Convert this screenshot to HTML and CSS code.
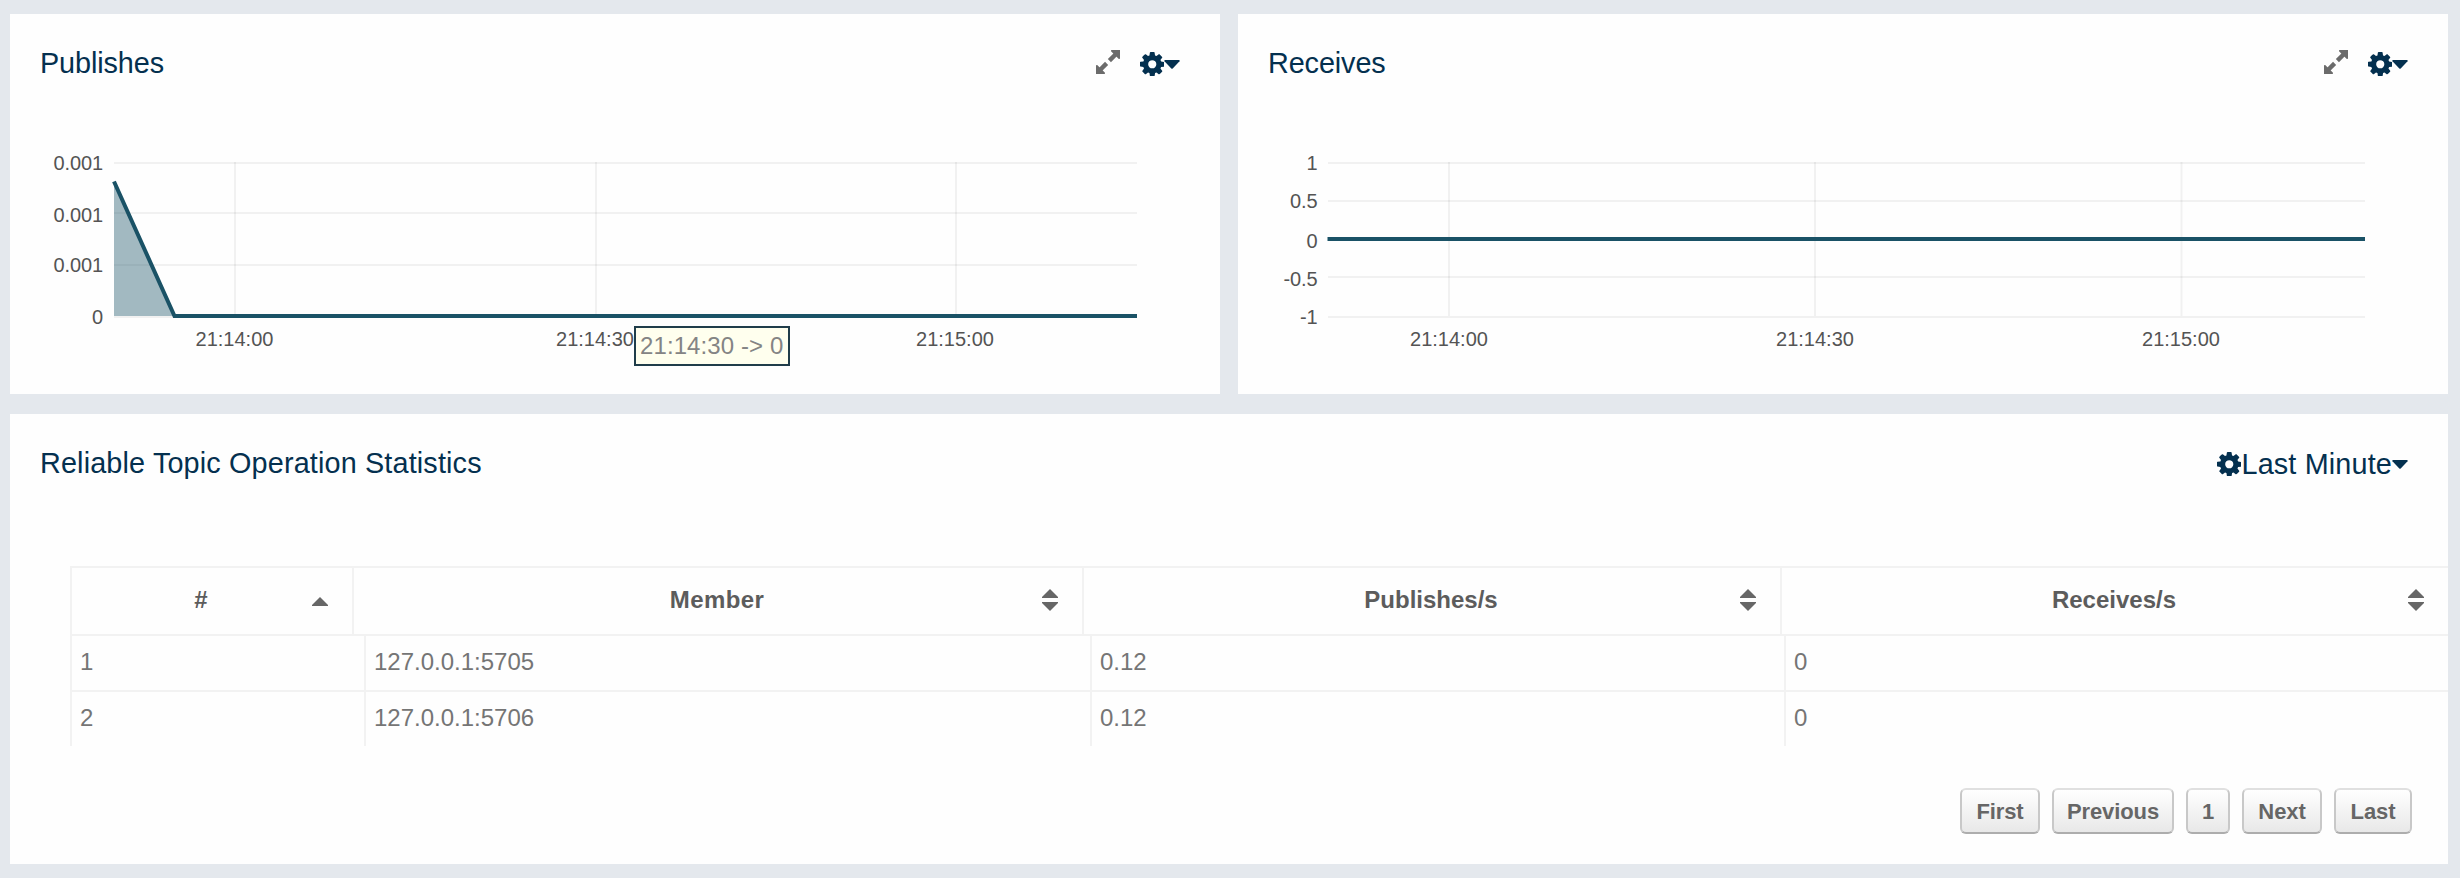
FILE: index.html
```html
<!DOCTYPE html>
<html lang="en">
<head>
<meta charset="utf-8">
<title>Reliable Topic</title>
<link rel="stylesheet" href="styles.css">
</head>
<body>
<svg width="0" height="0" class="defs">
  <symbol id="cog" viewBox="0 -128 1536 1536"><path d="M1024 640q0-106-75-181t-181-75-181 75-75 181 75 181 181 75 181-75 75-181zm512-109v222q0 12-8 23t-20 13l-185 28q-19 54-39 91 35 50 107 138 10 12 10 25t-9 23q-27 37-99 108t-94 71q-12 0-26-9l-138-108q-44 23-91 38-16 136-29 186-7 28-36 28h-222q-14 0-24.500-8.500t-11.500-21.500l-28-184q-49-16-90-37l-141 107q-10 9-25 9-14 0-25-11-126-114-165-168-7-10-7-23 0-12 8-23 15-21 51-66.500t54-70.500q-27-50-41-99l-183-27q-13-2-21-12.500t-8-23.500v-222q0-12 8-23t19-13l186-28q14-46 39-92-40-57-107-138-10-12-10-24 0-10 9-23 26-36 98.500-107.500t94.500-71.500q13 0 26 10l138 107q44-23 91-38 16-136 29-186 7-28 36-28h222q14 0 24.500 8.500t11.500 21.500l28 184q49 16 90 37l142-107q9-9 24-9 13 0 25 10 129 119 165 170 7 8 7 22 0 12-8 23-15 21-51 66.500t-54 70.500q26 50 41 98l183 28q13 2 21 12.500t8 23.500z"/></symbol>
  <symbol id="expand" viewBox="0 0 24 24">
    <path d="M15.200 0H24V8.800L22.800 9L15 1.200ZM0 15.200V24H8.800L9 22.800L1.200 15Z"/>
    <path d="M13.400 10.600L20 4M10.600 13.400L4 20" stroke="#6b6b6b" stroke-width="4.400"/>
  </symbol>
  <symbol id="caret" viewBox="0 0 16 9"><path d="M.8 0H15.200Q16 .5 15.500 1.300L8.700 8.500Q8 9 7.300 8.500L.5 1.300Q0 .5.8 0Z"/></symbol>
  <symbol id="sort" viewBox="0 0 16 22"><path d="M8 0L16 8V9H0V8ZM0 13H16V14L8 22L0 14Z"/></symbol>
  <symbol id="sort-up" viewBox="0 0 16 22"><path d="M8 8L16 16V17H0V16Z"/></symbol>
</svg>
<main class="page">
  <div class="charts">
    <section class="panel chart-panel">
      <header class="panel-head">
        <h2>Publishes</h2>
        <div class="tools"><svg class="expand"><use href="#expand"/></svg><svg class="cog"><use href="#cog"/></svg><svg class="caret"><use href="#caret"/></svg></div>
      </header>
      <svg class="plot" viewBox="10 100 1210 280">
        <g class="grid">
          <path d="M114 163H1137M114 213H1137M114 265H1137M114 317H1137"/>
          <path d="M235 162V316M596 162V316M956 162V316"/>
        </g>
        <path class="area" d="M114 181.500L174.500 316H114Z"/>
        <path class="line" d="M114 181.500L174.500 316H1137"/>
        <g class="y-labels">
          <text x="103" y="170">0.001</text><text x="103" y="222">0.001</text><text x="103" y="272">0.001</text><text x="103" y="324">0</text>
        </g>
        <g class="x-labels">
          <text x="234.500" y="346">21:14:00</text><text x="595" y="346">21:14:30</text><text x="955" y="346">21:15:00</text>
        </g>
      </svg>
      <div class="tooltip">21:14:30 -&gt; 0</div>
    </section>
    <section class="panel chart-panel">
      <header class="panel-head">
        <h2>Receives</h2>
        <div class="tools"><svg class="expand"><use href="#expand"/></svg><svg class="cog"><use href="#cog"/></svg><svg class="caret"><use href="#caret"/></svg></div>
      </header>
      <svg class="plot" viewBox="1238 100 1210 280">
        <g class="grid">
          <path d="M1328 163H2365M1328 201H2365M1328 277H2365M1328 317H2365"/>
          <path d="M1449 162V316M1815 162V316M2181.500 162V316"/>
        </g>
        <path class="line" d="M1327.500 239H2365"/>
        <g class="y-labels">
          <text x="1317.500" y="170">1</text><text x="1317.500" y="208">0.5</text><text x="1317.500" y="248">0</text><text x="1317.500" y="286">-0.5</text><text x="1317.500" y="324">-1</text>
        </g>
        <g class="x-labels">
          <text x="1449" y="346">21:14:00</text><text x="1815" y="346">21:14:30</text><text x="2181" y="346">21:15:00</text>
        </g>
      </svg>
    </section>
  </div>
  <section class="panel stats">
    <header class="panel-head">
      <h2>Reliable Topic Operation Statistics</h2>
      <div class="tools"><svg class="cog"><use href="#cog"/></svg><span class="range">Last Minute</span><svg class="caret"><use href="#caret"/></svg></div>
    </header>
    <div class="table">
      <div class="row head">
        <div class="th">#<svg class="sort"><use href="#sort-up"/></svg></div>
        <div class="th">Member<svg class="sort"><use href="#sort"/></svg></div>
        <div class="th">Publishes/s<svg class="sort"><use href="#sort"/></svg></div>
        <div class="th">Receives/s<svg class="sort"><use href="#sort"/></svg></div>
      </div>
      <div class="row"><div class="td">1</div><div class="td">127.0.0.1:5705</div><div class="td">0.12</div><div class="td">0</div></div>
      <div class="row"><div class="td">2</div><div class="td">127.0.0.1:5706</div><div class="td">0.12</div><div class="td">0</div></div>
    </div>
    <nav class="pager"><button>First</button><button>Previous</button><button>1</button><button>Next</button><button>Last</button></nav>
  </section>
</main>
</body>
</html>
```
FILE: styles.css
```css
* { box-sizing: border-box; }
body {
  margin: 0;
  background: #e4e8ed;
  font-family: "Liberation Sans", Arial, sans-serif;
}
.defs { display: none; }
.page {
  width: 2460px;
  height: 878px;
  padding: 14px 12px 14px 10px;
  display: flex;
  flex-direction: column;
  gap: 20px;
  overflow: hidden;
}
.charts { display: grid; grid-template-columns: 1210px 1210px; gap: 18px; height: 380px; }
.panel { background: #fefefe; position: relative; }
.panel-head {
  display: flex;
  justify-content: space-between;
  height: 86px;
  padding: 31px 40px 0 30px;
  color: #04304f;
}
.panel-head h2 { margin: 1px 0 0; font-size: 28.800px; font-weight: 400; line-height: 34px; letter-spacing: -0.1px; }
.stats .panel-head h2 { letter-spacing: 0.15px; }
.tools { display: flex; height: 34px; align-items: center; padding-top: 4px; fill: currentColor; }
.expand { width: 24px; height: 24px; margin: -4px 19.500px 0 0; fill: #6b6b6b; }
.cog { width: 24.500px; height: 24.500px; }
.caret { width: 16px; height: 9px; }
.range { font-size: 28.800px; line-height: 34px; letter-spacing: 0.15px; margin-top: 0; }
.plot { display: block; width: 1210px; height: 280px; }
.grid path { stroke: #000; stroke-opacity: 0.05; stroke-width: 2; fill: none; }
.area { fill: #1a5266; fill-opacity: 0.4; }
.line { stroke: #1a5266; stroke-width: 4; fill: none; }
.plot text { font-size: 20px; fill: #545454; }
.y-labels { text-anchor: end; letter-spacing: -0.1px; }
.x-labels { text-anchor: middle; }
.tooltip {
  position: absolute;
  left: 624px;
  top: 312px;
  width: 156px;
  height: 40px;
  border: 2px solid #203d4a;
  background: #ffffee;
  color: #848484;
  font-size: 24px;
  line-height: 35px;
  letter-spacing: 0.1px;
  padding-left: 4px;
  white-space: nowrap;
}
.stats { height: 450px; }
.table { margin: 66px 0 0 60px; border-left: 2px solid #f2f2f2; border-top: 2px solid #f2f2f2; color: #757575; font-size: 24px; }
.row { display: grid; grid-template-columns: 294px 726px 694px 1fr; height: 56px; }
.row.head { grid-template-columns: 282px 730px 698px 1fr; height: 68px; }
.row:last-child { height: 54px; }
.row:not(:last-child) { border-bottom: 2px solid #f2f2f2; }
.th { position: relative; border-right: 2px solid #f2f2f2; padding-right: 2px; text-align: center; line-height: 64px; font-weight: 700; color: #5c5c5c; }
.th:first-child { padding-right: 22px; }
.th:nth-child(2) { letter-spacing: 0.4px; }
.td { border-right: 2px solid #f2f2f2; padding-left: 8px; line-height: 52px; }
.row > :last-child { border-right: 0; }
.sort { position: absolute; right: 24px; top: 21px; width: 16px; height: 22px; fill: #666; }
.pager { display: flex; justify-content: flex-end; gap: 12px; padding: 42px 36px 0 0; }
.pager button {
  width: 80px;
  height: 46px;
  padding: 2px 0 0;
  border: 2px solid #c8c8c8;
  border-top-color: #e0e0e0;
  border-bottom-color: #adadad;
  border-radius: 6px;
  background: linear-gradient(#fff, #e8e8e8);
  font: 700 22px/38px "Liberation Sans", Arial, sans-serif;
  letter-spacing: -0.1px;
  color: #666;
}
.pager button:nth-child(2) { width: 122px; }
.pager button:nth-child(3) { width: 44px; }
.pager button:nth-child(5) { width: 78px; }
```
